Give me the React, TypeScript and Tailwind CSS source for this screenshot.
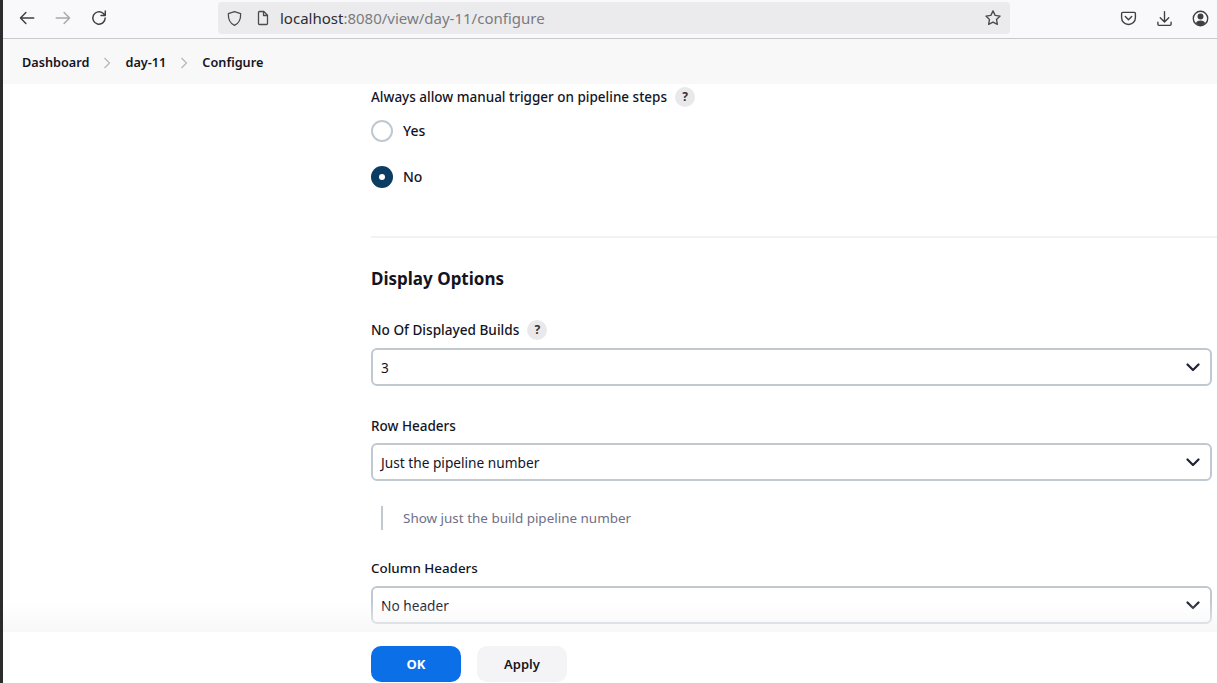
import React from "react";

function Help() {
  return (
    <span className="ml-2 flex h-5 w-5 items-center justify-center rounded-full bg-[#e9e9eb] text-[12px] font-bold text-[#333]">?</span>
  );
}

function Chevron() {
  return (
    <svg width="14" height="9" viewBox="0 0 14 9" fill="none" stroke="#1f2333" strokeWidth="2.2" strokeLinecap="round" strokeLinejoin="round">
      <path d="M1.5 1.5 7 7l5.500-5.500" />
    </svg>
  );
}

function Select({ value }: { value: string }) {
  return (
    <div className="mt-[8px] flex h-[38px] items-center justify-between rounded-[6px] border-2 border-[#c0c9d0] bg-white pl-[8px] pr-[10px] text-[13.7px] text-[#14141f]">
      <span className="mt-[2px]">{value}</span>
      <Chevron />
    </div>
  );
}

function Crumb() {
  return (
    <svg width="8" height="12" viewBox="0 0 8 12" fill="none" stroke="#b5b5b8" strokeWidth="1.2" className="mx-[14px]">
      <path d="M1.500 1 6.500 6l-5 5" />
    </svg>
  );
}

export default function App() {
  return (
    <div className="flex h-[683px] w-[1217px] overflow-hidden bg-white font-['Noto_Sans',sans-serif] text-[#14141f]">
      <div className="w-[3px] shrink-0 bg-[#2c2c2c]" />
      <div className="flex min-w-0 flex-1 flex-col">
        {/* Browser toolbar */}
        <div className="flex h-[39px] shrink-0 items-center border-b border-[#c9c9cb] bg-[#f9f9fb] pb-[2px] text-[#45454a]">
          <div className="ml-[15px] flex w-[200px] shrink-0 items-center">
            <svg width="18" height="18" viewBox="0 0 16 16" fill="none" stroke="#3f3f44" strokeWidth="1.3" strokeLinecap="round" strokeLinejoin="round">
              <path d="M14 8H2.500M7 3.200 2.200 8 7 12.800" />
            </svg>
            <svg width="18" height="18" viewBox="0 0 16 16" fill="none" stroke="#a8a8ac" strokeWidth="1.3" strokeLinecap="round" strokeLinejoin="round" className="ml-[18px]">
              <path d="M2 8h11.500M9 3.200 13.800 8 9 12.800" />
            </svg>
            <svg width="18" height="18" viewBox="0 0 16 16" fill="none" stroke="#3f3f44" strokeWidth="1.3" strokeLinecap="round" strokeLinejoin="round" className="ml-[18px]">
              <path d="M13.500 8A5.500 5.500 0 1 1 11.600 3.800L13.500 5.600M13.600 1.800v3.900H9.800" />
            </svg>
          </div>
          <div className="flex h-[32px] w-[792px] shrink-0 items-center rounded-[4px] bg-[#ebebed] pl-[8px] pr-[8px]">
            <svg width="17" height="17" viewBox="0 0 16 16" fill="none" stroke="#4a4a4f" strokeWidth="1.2" strokeLinejoin="round">
              <path d="M8 1.500 13.800 3.400c.2 5-1.300 9-5.800 11.100C3.500 12.400 2 8.400 2.200 3.400L8 1.500Z" />
            </svg>
            <svg width="16" height="16" viewBox="0 0 16 16" fill="none" stroke="#4a4a4f" strokeWidth="1.3" strokeLinejoin="round" className="ml-[12px]">
              <path d="M3.500 2.500c0-.5.4-1 1-1h4.300l3.700 3.700v8.300c0 .6-.4 1-1 1h-7c-.6 0-1-.4-1-1v-11Z" />
              <path d="M8.500 1.700v3.800h3.800" />
            </svg>
            <span className="ml-[9px] text-[15px] leading-none text-[#2d2d33]">
              localhost<span className="text-[#7b7b80]">:8080/view/day-11/configure</span>
            </span>
            <svg width="18" height="18" viewBox="0 0 16 16" fill="none" stroke="#4a4a4f" strokeWidth="1.2" strokeLinejoin="round" className="ml-auto">
              <path d="m8 1.700 1.900 4 4.400.6-3.200 3 .8 4.400L8 11.600l-3.900 2.100.8-4.400-3.200-3 4.400-.6L8 1.700Z" />
            </svg>
          </div>
          <div className="ml-[110px] flex shrink-0 items-center">
            <svg width="17" height="17" viewBox="0 0 16 16" fill="none" stroke="#3f3f44" strokeWidth="1.3" strokeLinecap="round" strokeLinejoin="round">
              <path d="M2.500 2.200h11c.6 0 1 .4 1 1v4.200c0 3.500-2.900 6.200-6.500 6.200S1.500 10.900 1.500 7.400V3.200c0-.6.400-1 1-1Z" />
              <path d="M5 6.200 8 9.200l3-3" />
            </svg>
            <svg width="17" height="17" viewBox="0 0 16 16" fill="none" stroke="#3f3f44" strokeWidth="1.3" strokeLinecap="round" strokeLinejoin="round" className="ml-[19px]">
              <path d="M8 1.500v9.500M4 7.300l4 4 4-4M1.800 11.500v2c0 .6.400 1 1 1h10.400c.6 0 1-.4 1-1v-2" />
            </svg>
            <svg width="17" height="17" viewBox="0 0 16 16" className="ml-[19px]">
              <circle cx="8" cy="8" r="6.800" fill="none" stroke="#3f3f44" strokeWidth="1.300" />
              <circle cx="8" cy="6.200" r="2.800" fill="#3f3f44" />
              <path d="M3.500 12.200c1-1.700 2.600-2.400 4.500-2.400s3.500.7 4.500 2.400C11.300 13.800 9.800 14.500 8 14.500s-3.300-.7-4.500-2.300Z" fill="#3f3f44" />
            </svg>
          </div>
        </div>

        {/* Breadcrumb */}
        <div className="flex h-[45px] shrink-0 items-center bg-[#f8f8f9] pl-[19px] pt-[2px] text-[12.7px] font-semibold text-[#14141f]">
          <span>Dashboard</span>
          <Crumb />
          <span>day-11</span>
          <Crumb />
          <span>Configure</span>
        </div>

        {/* Form */}
        <div className="min-h-0 flex-1 overflow-hidden pl-[368px] pr-[5px]">
          <div className="mt-[3px] flex h-[20px] items-center text-[13.5px] font-medium">
            Always allow manual trigger on pipeline steps
            <Help />
          </div>
          <div className="mt-[13px] flex h-[22px] items-center text-[14px] font-medium">
            <span className="mr-[10px] h-[22px] w-[22px] rounded-full border-2 border-[#c0c9d0] bg-white" />
            <span className="-mt-[2px]">Yes</span>
          </div>
          <div className="mt-[24px] flex h-[22px] items-center text-[14px] font-medium">
            <span className="mr-[10px] flex h-[22px] w-[22px] items-center justify-center rounded-full bg-[#0b3d62]">
              <span className="h-[6px] w-[6px] rounded-full bg-white" />
            </span>
            <span className="-mt-[2px]">No</span>
          </div>
          <div className="-mr-[5px] mt-[48px] h-[2px] bg-[#f2f2f5]" />
          <h2 className="mt-[27px] h-[26px] text-[17px] font-bold leading-[28px]">Display Options</h2>
          <div className="mt-[29px] flex h-[20px] items-center text-[13.6px] font-medium">
            No Of Displayed Builds
            <Help />
          </div>
          <Select value="3" />
          <div className="mt-[29px] h-[20px] text-[13.5px] font-medium leading-[22px]">Row Headers</div>
          <Select value="Just the pipeline number" />
          <div className="ml-[10px] mt-[25px] flex h-[24px] items-center border-l-2 border-[#c0c9d0] pl-[20px] text-[13.45px] text-[#6f7088]">
            Show just the build pipeline number
          </div>
          <div className="mt-[28px] h-[20px] text-[13.4px] font-medium leading-[20px]">Column Headers</div>
          <Select value="No header" />
        </div>

        {/* Bottom bar */}
        <div className="relative flex h-[51px] shrink-0 items-start bg-white pl-[368px] pt-[14px]">
          <div className="absolute inset-x-0 -top-[30px] h-[30px] bg-gradient-to-b from-transparent to-[#f6f6f8]/80" />
          <button className="flex h-[36px] w-[90px] items-center justify-center rounded-[10px] bg-[#0b6fe8] pt-[2px] text-[13px] font-bold text-white">OK</button>
          <button className="ml-[16px] flex h-[36px] w-[90px] items-center justify-center rounded-[10px] bg-[#f4f4f7] pt-[2px] text-[13px] font-semibold text-[#14141f]">Apply</button>
        </div>
      </div>
    </div>
  );
}
